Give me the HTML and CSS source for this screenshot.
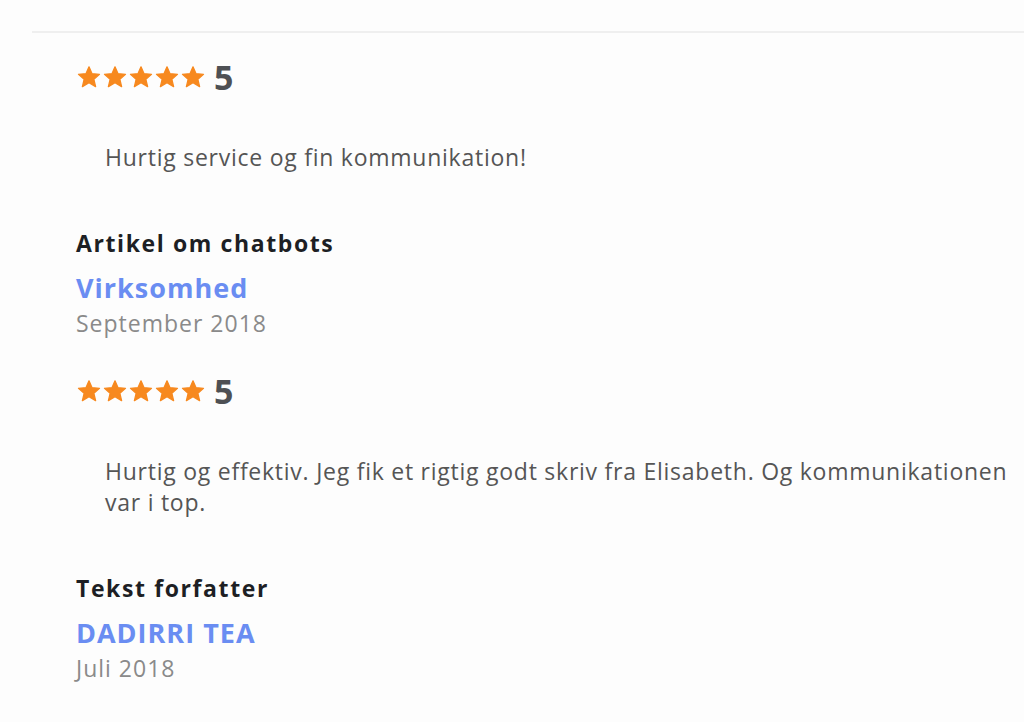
FILE: index.html
```html
<!DOCTYPE html>
<html lang="da">

<head>
    <meta charset="UTF-8">
    <meta name="viewport" content="width=device-width, initial-scale=1.0">
    <title>Anmeldelser</title>
    <link rel="stylesheet" href="styles.css">
</head>

<body>
    <div class="reviews">
        <div class="review">
            <div class="rating">
                <span class="stars">
                    <svg viewBox="0 0 24 24"><path d="M12 2.6l2.8 6.3 6.9.6-5.2 4.6 1.6 6.8L12 17.3l-6.1 3.6 1.6-6.8-5.2-4.6 6.9-.6z"/></svg>
                    <svg viewBox="0 0 24 24"><path d="M12 2.6l2.8 6.3 6.9.6-5.2 4.6 1.6 6.8L12 17.3l-6.1 3.6 1.6-6.8-5.2-4.6 6.9-.6z"/></svg>
                    <svg viewBox="0 0 24 24"><path d="M12 2.6l2.8 6.3 6.9.6-5.2 4.6 1.6 6.8L12 17.3l-6.1 3.6 1.6-6.8-5.2-4.6 6.9-.6z"/></svg>
                    <svg viewBox="0 0 24 24"><path d="M12 2.6l2.8 6.3 6.9.6-5.2 4.6 1.6 6.8L12 17.3l-6.1 3.6 1.6-6.8-5.2-4.6 6.9-.6z"/></svg>
                    <svg viewBox="0 0 24 24"><path d="M12 2.6l2.8 6.3 6.9.6-5.2 4.6 1.6 6.8L12 17.3l-6.1 3.6 1.6-6.8-5.2-4.6 6.9-.6z"/></svg>
                </span>
                <span class="score">5</span>
            </div>
            <p class="review-text">Hurtig service og fin kommunikation!</p>
            <h3 class="task">Artikel om chatbots</h3>
            <a class="client" href="#">Virksomhed</a>
            <div class="date">September 2018</div>
        </div>

        <div class="review">
            <div class="rating">
                <span class="stars">
                    <svg viewBox="0 0 24 24"><path d="M12 2.6l2.8 6.3 6.9.6-5.2 4.6 1.6 6.8L12 17.3l-6.1 3.6 1.6-6.8-5.2-4.6 6.9-.6z"/></svg>
                    <svg viewBox="0 0 24 24"><path d="M12 2.6l2.8 6.3 6.9.6-5.2 4.6 1.6 6.8L12 17.3l-6.1 3.6 1.6-6.8-5.2-4.6 6.9-.6z"/></svg>
                    <svg viewBox="0 0 24 24"><path d="M12 2.6l2.8 6.3 6.9.6-5.2 4.6 1.6 6.8L12 17.3l-6.1 3.6 1.6-6.8-5.2-4.6 6.9-.6z"/></svg>
                    <svg viewBox="0 0 24 24"><path d="M12 2.6l2.8 6.3 6.9.6-5.2 4.6 1.6 6.8L12 17.3l-6.1 3.6 1.6-6.8-5.2-4.6 6.9-.6z"/></svg>
                    <svg viewBox="0 0 24 24"><path d="M12 2.6l2.8 6.3 6.9.6-5.2 4.6 1.6 6.8L12 17.3l-6.1 3.6 1.6-6.8-5.2-4.6 6.9-.6z"/></svg>
                </span>
                <span class="score">5</span>
            </div>
            <p class="review-text">Hurtig og effektiv. Jeg fik et rigtig godt skriv fra Elisabeth. Og kommunikationen var i top.</p>
            <h3 class="task">Tekst forfatter</h3>
            <a class="client" href="#">DADIRRI TEA</a>
            <div class="date">Juli 2018</div>
        </div>
    </div>
</body>

</html>
```

FILE: styles.css
```css
* {
    margin: 0;
    padding: 0;
    box-sizing: border-box;
}

body {
    font-family: 'Open Sans', 'Noto Sans', sans-serif;
    background: #fdfdfd;
    color: #555;
    padding-top: 31px;
}

.reviews {
    margin-left: 32px;
    border-top: 2px solid #efefef;
    padding: 26px 0 0 44px;
}

.review {
    margin-bottom: 35px;
}

.rating {
    display: flex;
    align-items: center;
    gap: 8px;
    height: 36px;
}

.stars {
    display: flex;
}

.stars svg {
    width: 26px;
    height: 26px;
    fill: #f7891f;
    stroke: #f7891f;
    stroke-width: 1.2;
    stroke-linejoin: round;
}

.score {
    font-size: 34px;
    font-weight: 700;
    color: #4e5054;
    line-height: 1;
}

.review-text {
    font-size: 23px;
    letter-spacing: 0.75px;
    line-height: 31px;
    color: #555;
    margin: 47px 0 0 29px;
}

.task {
    font-size: 23px;
    font-weight: 700;
    letter-spacing: 1.6px;
    color: #1d1f24;
    margin-top: 55px;
    line-height: 30px;
}

.client {
    display: block;
    font-size: 27px;
    font-weight: 700;
    letter-spacing: 1px;
    color: #6a8df2;
    text-decoration: none;
    margin-top: 13px;
    line-height: 34px;
}

.date {
    font-size: 23px;
    letter-spacing: 1px;
    color: #8a8a8a;
    line-height: 30px;
    margin-top: 3px;
}
```
